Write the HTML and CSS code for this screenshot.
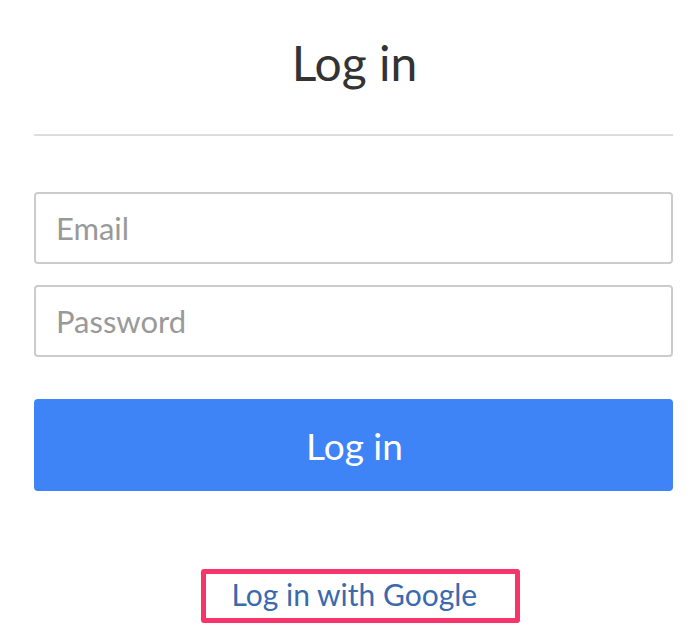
FILE: index.html
```html
<!DOCTYPE html>
<html>
<head>
<meta charset="utf-8">
<link rel="stylesheet" href="styles.css">
</head>
<body>
<div class="page">
  <h1 class="title">Log in</h1>
  <hr class="divider">
  <form class="form">
    <input class="field" type="email" placeholder="Email">
    <input class="field" type="password" placeholder="Password">
    <button class="btn" type="button">Log in</button>
  </form>
  <div class="alt">
    <a class="google" href="#">Log in with Google</a>
  </div>
</div>
</body>
</html>
```
FILE: styles.css
```css
html, body {
  margin: 0;
  padding: 0;
  background: #fff;
}
body {
  font-family: Lato, "Open Sans", sans-serif;
}
.page {
  padding: 0 21px 0 34px;
  display: flex;
  flex-direction: column;
}
.title {
  margin: 34px 0 0;
  text-align: center;
  font-weight: 400;
  font-size: 48px;
  line-height: 58px;
  color: #333;
  padding-left: 2px;
}
.divider {
  margin: 42px 0 0;
  border: 0;
  border-top: 2px solid #ddd;
  height: 0;
}
.form {
  margin-top: 56px;
  display: flex;
  flex-direction: column;
}
.field {
  box-sizing: border-box;
  height: 72px;
  margin: 0 0 21px;
  border: 2px solid #ccc;
  border-radius: 4px;
  padding: 0 20px;
  font-family: inherit;
  font-size: 31px;
  color: #555;
  outline: none;
}
.field::placeholder {
  color: #999;
}
.btn {
  margin-top: 21px;
  height: 92px;
  border: 0;
  border-radius: 4px;
  background: #3e84f7;
  color: #fff;
  font-family: inherit;
  font-size: 37px;
  padding: 0 0 0 2px;
}
.alt {
  margin-top: 78px;
  display: flex;
  justify-content: center;
}
.google {
  display: block;
  box-sizing: border-box;
  width: 319px;
  height: 54px;
  border: 5px solid #f8346a;
  border-radius: 3px;
  padding-left: 26px;
  font-size: 30px;
  line-height: 40px;
  color: #3a6aad;
  text-decoration: none;
  margin-left: 13px;
}
```
